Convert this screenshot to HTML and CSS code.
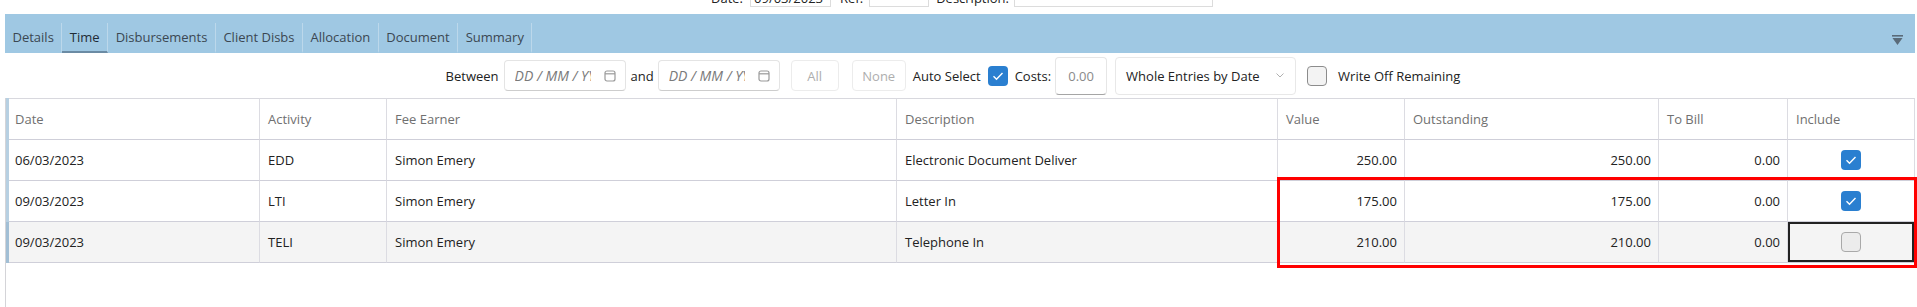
FILE: index.html
```html
<!doctype html>
<html>
<head>
    <meta charset="utf-8">
    <title>Bill - Time</title>
    <link rel="stylesheet" href="styles.css">
</head>
<body>
<!-- Kopfzeile der Rechnung (oben abgeschnitten) -->
<div class="topbar">
    <span class="top-label">Date:</span>
    <span class="top-input top-date">09/03/2023</span>
    <span class="top-label">Ref:</span>
    <span class="top-input top-ref"></span>
    <span class="top-label">Description:</span>
    <span class="top-input top-desc"></span>
</div>

<div class="tabs">
    <div class="tab">Details</div>
    <div class="tab active">Time</div>
    <div class="tab">Disbursements</div>
    <div class="tab">Client Disbs</div>
    <div class="tab">Allocation</div>
    <div class="tab">Document</div>
    <div class="tab">Summary</div>
    <div class="tab-collapse">
        <svg width="11" height="11" viewBox="0 0 11 11"><rect x="0" y="0" width="11" height="1.6" fill="#5a6b79"/><polygon points="0.5,3 10.5,3 5.5,10" fill="#5a6b79"/></svg>
    </div>
</div>

<div class="toolbar">
    <span class="lbl lbl-between">Between</span>
    <span class="date-input">
        <span class="placeholder">DD / MM / YYYY</span>
        <svg width="12" height="12" viewBox="0 0 12 12"><rect x="1" y="1" width="10" height="10" rx="2" fill="none" stroke="#9a9a9a" stroke-width="1.2"/><line x1="1" y1="3.8" x2="11" y2="3.8" stroke="#9a9a9a" stroke-width="1.2"/></svg>
    </span>
    <span class="lbl lbl-and">and</span>
    <span class="date-input date-to">
        <span class="placeholder">DD / MM / YYYY</span>
        <svg width="12" height="12" viewBox="0 0 12 12"><rect x="1" y="1" width="10" height="10" rx="2" fill="none" stroke="#9a9a9a" stroke-width="1.2"/><line x1="1" y1="3.8" x2="11" y2="3.8" stroke="#9a9a9a" stroke-width="1.2"/></svg>
    </span>
    <span class="btn btn-all">All</span>
    <span class="btn btn-none">None</span>
    <span class="lbl lbl-auto">Auto Select</span>
    <span class="check checked check-auto">
        <svg width="20" height="20" viewBox="0 0 20 20"><path d="M5.5 10.3l3 3 6-6.4" fill="none" stroke="#fff" stroke-width="1.4"/></svg>
    </span>
    <span class="lbl lbl-costs">Costs:</span>
    <span class="costs-input">0.00</span>
    <span class="select">
        Whole Entries by Date
        <svg width="8" height="5" viewBox="0 0 8 5"><polyline points="0.5,0.5 4,4 7.5,0.5" fill="none" stroke="#b0b0b0" stroke-width="1"/></svg>
    </span>
    <span class="check check-writeoff"></span>
    <span class="lbl">Write Off Remaining</span>
</div>

<div class="grid-wrap">
    <div class="grid-row grid-head">
        <div>Date</div>
        <div>Activity</div>
        <div>Fee Earner</div>
        <div>Description</div>
        <div>Value</div>
        <div>Outstanding</div>
        <div>To Bill</div>
        <div>Include</div>
    </div>
    <div class="grid-row">
        <div>06/03/2023</div>
        <div>EDD</div>
        <div>Simon Emery</div>
        <div>Electronic Document Deliver</div>
        <div class="num">250.00</div>
        <div class="num">250.00</div>
        <div class="num">0.00</div>
        <div class="inc"><span class="check checked"><svg width="20" height="20" viewBox="0 0 20 20"><path d="M5.5 10.3l3 3 6-6.4" fill="none" stroke="#fff" stroke-width="1.4"/></svg></span></div>
    </div>
    <div class="grid-row">
        <div>09/03/2023</div>
        <div>LTI</div>
        <div>Simon Emery</div>
        <div>Letter In</div>
        <div class="num">175.00</div>
        <div class="num">175.00</div>
        <div class="num">0.00</div>
        <div class="inc"><span class="check checked"><svg width="20" height="20" viewBox="0 0 20 20"><path d="M5.5 10.3l3 3 6-6.4" fill="none" stroke="#fff" stroke-width="1.4"/></svg></span></div>
    </div>
    <div class="grid-row current">
        <div>09/03/2023</div>
        <div>TELI</div>
        <div>Simon Emery</div>
        <div>Telephone In</div>
        <div class="num">210.00</div>
        <div class="num">210.00</div>
        <div class="num">0.00</div>
        <div class="inc focused"><span class="check unchecked"></span></div>
    </div>

    <!-- Markierung (Anmerkung im Screenshot) -->
    <div class="red-mark"></div>
</div>
</body>
</html>
```

FILE: styles.css
```css
html, body {
    height: 100%;
}

body {
    margin: 0;
    padding: 0 1px 0 5px;
    box-sizing: border-box;
    display: flex;
    flex-direction: column;
    font-family: "Open Sans", "Noto Sans", sans-serif;
    font-size: 13px;
    color: #222;
    background: #fff;
    overflow: hidden;
}

/* Kopfzeile */
.topbar {
    height: 14px;
    flex: none;
    overflow: hidden;
    display: flex;
    justify-content: center;
    align-items: flex-end;
    padding: 0 0 7px 3px;
    box-sizing: border-box;
}

.top-label {
    line-height: 16px;
    padding-bottom: 1px;
}

.top-input {
    height: 24px;
    box-sizing: border-box;
    border: 1px solid #dcdcdc;
    line-height: 16px;
    padding: 0 3px;
    display: flex;
    align-items: flex-end;
}

.top-date {
    width: 81px;
    margin: 0 9px 0 7px;
}

.top-ref {
    width: 60px;
    margin: 0 7px 0 6px;
}

.top-desc {
    width: 199px;
    margin-left: 5px;
}

/* Reiter */
.tabs {
    flex: none;
    height: 39px;
    box-sizing: border-box;
    padding-top: 9px;
    background: #9fc8e3;
    display: flex;
    margin-right: 1px;
}

.tab {
    padding: 5px 7.5px 5px;
    line-height: 18px;
    color: #3b4752;
    border-bottom: 2px solid transparent;
    border-right: 1px solid rgba(255, 255, 255, 0.3);
}

.tab.active {
    color: #1f2b35;
    border-bottom-color: #6b8ba4;
}

.tab-collapse {
    margin-left: auto;
    margin-right: 12px;
    padding-top: 9px;
}

/* Filterleiste */
.toolbar {
    flex: none;
    height: 45px;
    display: flex;
    justify-content: center;
    align-items: center;
    padding-right: 15px;
}

.lbl {
    white-space: nowrap;
}

.lbl-between { margin-right: 5px; }
.lbl-and { margin: 0 4px 0 5px; }
.lbl-auto { margin: 0 7px 0 7px; }
.lbl-costs { margin: 0 4px 0 7px; }

.date-input {
    width: 122px;
    height: 31px;
    box-sizing: border-box;
    border: 1px solid #e4e4e4;
    border-bottom-color: #cdcdcd;
    border-radius: 4px;
    display: flex;
    align-items: center;
    justify-content: space-between;
    padding: 0 9px 0 10px;
}

.date-to {
    margin-right: 11px;
}

.placeholder {
    width: 76px;
    overflow: hidden;
    white-space: nowrap;
    font-style: italic;
    font-size: 14px;
    color: #7a7a7a;
}

.date-input svg {
    display: block;
}

.btn {
    height: 31px;
    box-sizing: border-box;
    border: 1px solid #ececec;
    border-radius: 4px;
    color: #aeaeae;
    display: flex;
    align-items: center;
    justify-content: center;
}

.btn-all {
    width: 48px;
    margin-right: 13px;
}

.btn-none {
    width: 54px;
}

.check {
    width: 20px;
    height: 20px;
    box-sizing: border-box;
    border-radius: 4px;
    display: inline-block;
    flex: none;
}

.check svg {
    display: block;
}

.checked {
    background: #2a7fd0;
}

.check-writeoff {
    background: #f3f3f3;
    border: 1px solid #8c8c8c;
    margin: 0 11px;
}

.costs-input {
    width: 52px;
    height: 38px;
    box-sizing: border-box;
    border: 1px solid #e6e6e6;
    border-bottom-color: #a5a5a5;
    border-radius: 4px;
    display: flex;
    align-items: center;
    justify-content: center;
    color: #8a8a8a;
    margin-right: 8px;
}

.select {
    width: 181px;
    height: 38px;
    box-sizing: border-box;
    border: 1px solid #e8e8e8;
    border-radius: 4px;
    display: flex;
    align-items: center;
    justify-content: space-between;
    padding: 0 11px 0 10px;
    white-space: nowrap;
}

/* Tabelle */
.grid-wrap {
    flex: 1;
    position: relative;
    border-left: 1px solid #d4d4d8;
}

.grid-row {
    display: grid;
    grid-template-columns: 251px 127px 510px 381px 127px 254px 129px 127px;
    border-left: 3px solid #b7d0e2;
}

.grid-row > div {
    height: 41px;
    box-sizing: border-box;
    border-right: 1px solid #dcdce2;
    border-bottom: 1px solid #cfcfd9;
    padding: 0 7px 0 8px;
    display: flex;
    align-items: center;
    white-space: nowrap;
    overflow: hidden;
}

.grid-row > div:first-child {
    padding-left: 6px;
}

.grid-head > div {
    height: 42px;
    border-top: 1px solid #d8d8de;
    color: #707070;
}

.grid-row > .num {
    justify-content: flex-end;
}

.grid-row > .inc {
    justify-content: center;
    padding: 0;
}

.grid-row.current {
    background: #f4f4f4;
    border-left-color: #a2bfd5;
}

.grid-row > .focused {
    box-shadow: inset 0 0 0 2px #222;
}

.unchecked {
    background: #ececec;
    border: 1px solid #a9a9a9;
}

.red-mark {
    position: absolute;
    left: 1271px;
    top: 79px;
    width: 640px;
    height: 91px;
    box-sizing: border-box;
    border: 3px solid #f00;
}
```
